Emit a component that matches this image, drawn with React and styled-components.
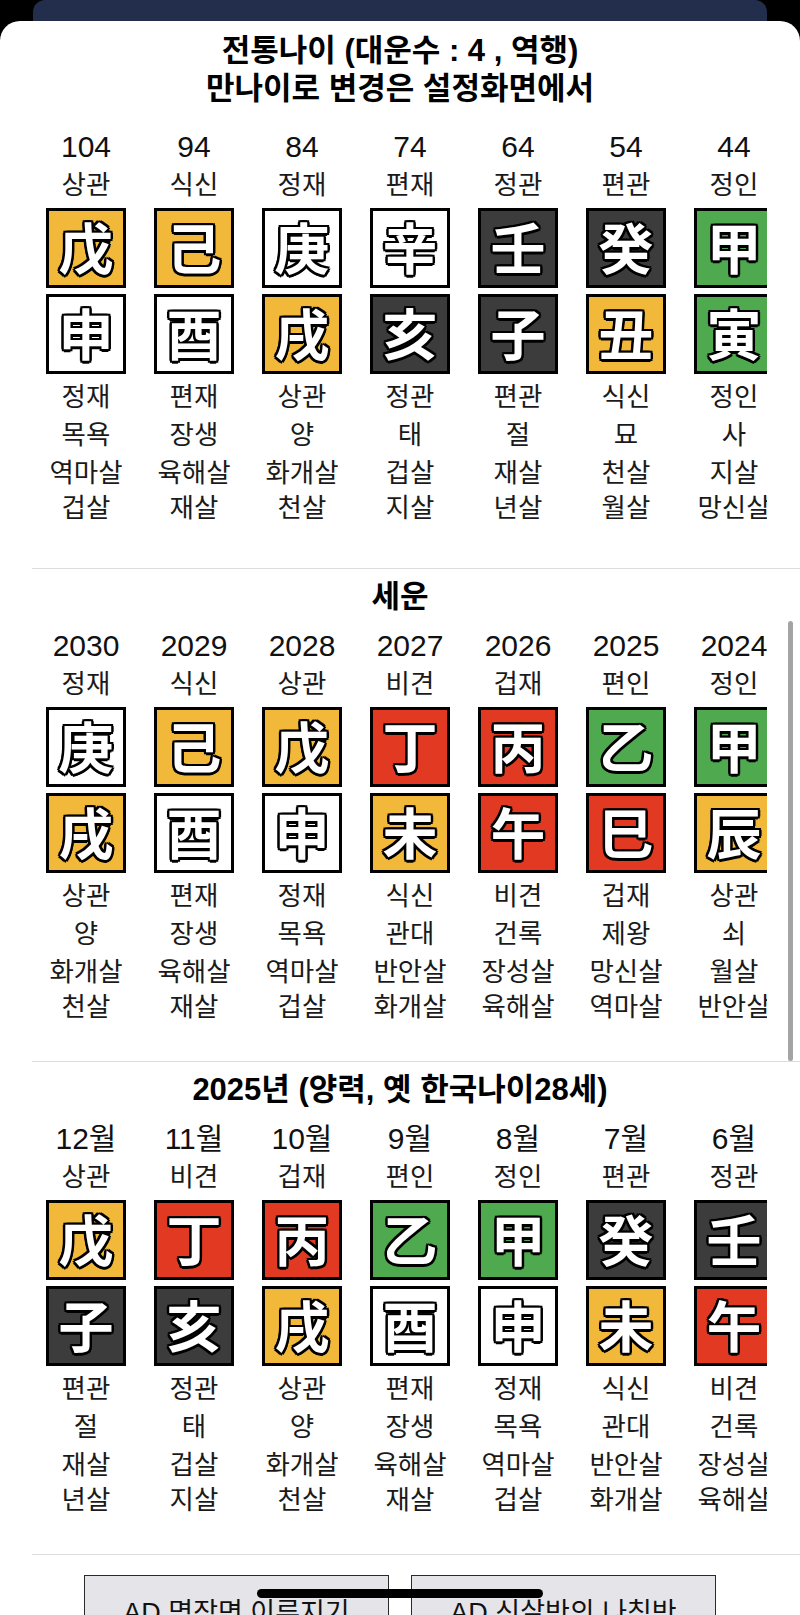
import React from 'react';
import styled, { createGlobalStyle } from 'styled-components';

const GlobalStyle = createGlobalStyle`
  html, body {
    margin: 0;
    padding: 0;
    background: #000;
  }
  body {
    font-family: "Liberation Sans", "Noto Sans CJK KR", sans-serif;
  }
`;

const TONES = {
  yellow: '#f2b83a',
  white: '#ffffff',
  dark: '#3c3c3c',
  green: '#4ea94f',
  red: '#e23a22',
};

const Screen = styled.div`
  position: relative;
  width: 800px;
  height: 1615px;
  overflow: hidden;
  background: #000;
`;

const BackSheet = styled.div`
  height: 40px;
  margin: 0 33px;
  background: #232d4c;
  border-radius: 12px 12px 0 0;
`;

const Card = styled.div`
  position: relative;
  margin-top: -19px;
  padding-top: 11px;
  min-height: 1600px;
  background: #fff;
  border-radius: 20px 20px 0 0;
`;

const Section = styled.section`
  padding: ${(p) => (p.$first ? '0 0 42px' : '9px 0 36px')};
`;

const Heading = styled.h2`
  margin: 0;
  font-size: 31px;
  line-height: 38px;
  font-weight: 700;
  color: #000;
  text-align: center;
`;

const Divider = styled.div`
  height: 1px;
  margin-left: 32px;
  background: #dcdcdc;
`;

const Row = styled.div`
  display: flex;
  gap: 28px;
  margin: ${(p) => p.$gap}px 33px 0 32px;
  padding-left: 14px;
  overflow: hidden;
`;

const Column = styled.div`
  flex: 0 0 80px;
  display: flex;
  flex-direction: column;
  align-items: center;
`;

const Num = styled.div`
  font-size: 30px;
  line-height: 38px;
  color: #111;
  white-space: nowrap;
`;

const Label = styled.div`
  font-size: 26.5px;
  line-height: 38px;
  color: #1a1a1a;
  white-space: nowrap;
`;

const Pillar = styled.div`
  display: flex;
  flex-direction: column;
  gap: 6px;
  margin: 4px 0;
`;

const Cell = styled.div`
  width: 80px;
  height: 80px;
  box-sizing: border-box;
  padding-bottom: 6px;
  border: 3px solid #000;
  background: ${(p) => TONES[p.$tone]};
  display: flex;
  align-items: center;
  justify-content: center;
  font-family: "Noto Sans CJK JP", "Noto Sans CJK SC", sans-serif;
  font-weight: 700;
  font-size: 55px;
  line-height: 1;
  color: #fff;
  text-shadow: -2px -2px 0 #000, 2px -2px 0 #000, -2px 2px 0 #000,
    2px 2px 0 #000, 0 -2.5px 0 #000, 0 2.5px 0 #000, -2.5px 0 0 #000,
    2.5px 0 0 #000;
`;

const SalBlock = styled.div`
  padding-top: 2px;
  font-size: 26.5px;
  line-height: 35px;
  color: #1a1a1a;
  text-align: center;
  white-space: nowrap;
`;

const BottomBar = styled.div`
  display: flex;
  justify-content: center;
  gap: 22px;
  padding-top: 20px;
`;

const AdButton = styled.button`
  width: 305px;
  height: 90px;
  padding: 22px 0 0;
  box-sizing: border-box;
  display: flex;
  justify-content: center;
  align-items: flex-start;
  background: #e4e4e9;
  border: 1.5px solid #2a2a2a;
  border-radius: 0;
  font-family: "Liberation Sans", "Noto Sans CJK KR", sans-serif;
  font-size: 27px;
  line-height: 30px;
  color: #111;
`;

const ScrollIndicator = styled.div`
  position: absolute;
  top: 621px;
  right: 7px;
  width: 5px;
  height: 440px;
  border-radius: 3px;
  background: #a4a4a4;
`;

const HomeIndicator = styled.div`
  position: absolute;
  top: 1589px;
  left: 257px;
  width: 286px;
  height: 9px;
  border-radius: 5px;
  background: #000;
`;

const daeun = [
  ['104', '상관', '戊', 'yellow', '申', 'white', '정재', '목욕', '역마살', '겁살'],
  ['94', '식신', '己', 'yellow', '酉', 'white', '편재', '장생', '육해살', '재살'],
  ['84', '정재', '庚', 'white', '戌', 'yellow', '상관', '양', '화개살', '천살'],
  ['74', '편재', '辛', 'white', '亥', 'dark', '정관', '태', '겁살', '지살'],
  ['64', '정관', '壬', 'dark', '子', 'dark', '편관', '절', '재살', '년살'],
  ['54', '편관', '癸', 'dark', '丑', 'yellow', '식신', '묘', '천살', '월살'],
  ['44', '정인', '甲', 'green', '寅', 'green', '정인', '사', '지살', '망신살'],
];

const seun = [
  ['2030', '정재', '庚', 'white', '戌', 'yellow', '상관', '양', '화개살', '천살'],
  ['2029', '식신', '己', 'yellow', '酉', 'white', '편재', '장생', '육해살', '재살'],
  ['2028', '상관', '戊', 'yellow', '申', 'white', '정재', '목욕', '역마살', '겁살'],
  ['2027', '비견', '丁', 'red', '未', 'yellow', '식신', '관대', '반안살', '화개살'],
  ['2026', '겁재', '丙', 'red', '午', 'red', '비견', '건록', '장성살', '육해살'],
  ['2025', '편인', '乙', 'green', '巳', 'red', '겁재', '제왕', '망신살', '역마살'],
  ['2024', '정인', '甲', 'green', '辰', 'yellow', '상관', '쇠', '월살', '반안살'],
];

const wolun = [
  ['12월', '상관', '戊', 'yellow', '子', 'dark', '편관', '절', '재살', '년살'],
  ['11월', '비견', '丁', 'red', '亥', 'dark', '정관', '태', '겁살', '지살'],
  ['10월', '겁재', '丙', 'red', '戌', 'yellow', '상관', '양', '화개살', '천살'],
  ['9월', '편인', '乙', 'green', '酉', 'white', '편재', '장생', '육해살', '재살'],
  ['8월', '정인', '甲', 'green', '申', 'white', '정재', '목욕', '역마살', '겁살'],
  ['7월', '편관', '癸', 'dark', '未', 'yellow', '식신', '관대', '반안살', '화개살'],
  ['6월', '정관', '壬', 'dark', '午', 'red', '비견', '건록', '장성살', '육해살'],
];

const PillarColumn = ({ item }) => {
  const [num, top, stem, stemTone, branch, branchTone, bottom, stage, sal1, sal2] = item;
  return (
    <Column>
      <Num>{num}</Num>
      <Label>{top}</Label>
      <Pillar>
        <Cell $tone={stemTone}>{stem}</Cell>
        <Cell $tone={branchTone}>{branch}</Cell>
      </Pillar>
      <Label>{bottom}</Label>
      <Label>{stage}</Label>
      <SalBlock>
        {sal1}
        <br />
        {sal2}
      </SalBlock>
    </Column>
  );
};

const PillarRow = ({ items, gap }) => (
  <Row $gap={gap}>
    {items.map((item) => (
      <PillarColumn key={item[0]} item={item} />
    ))}
  </Row>
);

const App = () => {
  return (
    <Screen>
      <GlobalStyle />
      <BackSheet />
      <Card>
        <Section $first>
          <Heading>
            전통나이 (대운수 : 4 , 역행)
            <br />
            만나이로 변경은 설정화면에서
          </Heading>
          <PillarRow items={daeun} gap={20} />
        </Section>
        <Divider />
        <Section>
          <Heading>세운</Heading>
          <PillarRow items={seun} gap={11} />
        </Section>
        <Divider />
        <Section>
          <Heading>2025년 (양력, 옛 한국나이28세)</Heading>
          <PillarRow items={wolun} gap={11} />
        </Section>
        <Divider />
        <BottomBar>
          <AdButton>AD 명장면 이루지기</AdButton>
          <AdButton>AD 신살반의 나침반</AdButton>
        </BottomBar>
      </Card>
      <ScrollIndicator />
      <HomeIndicator />
    </Screen>
  );
};

export default App;
